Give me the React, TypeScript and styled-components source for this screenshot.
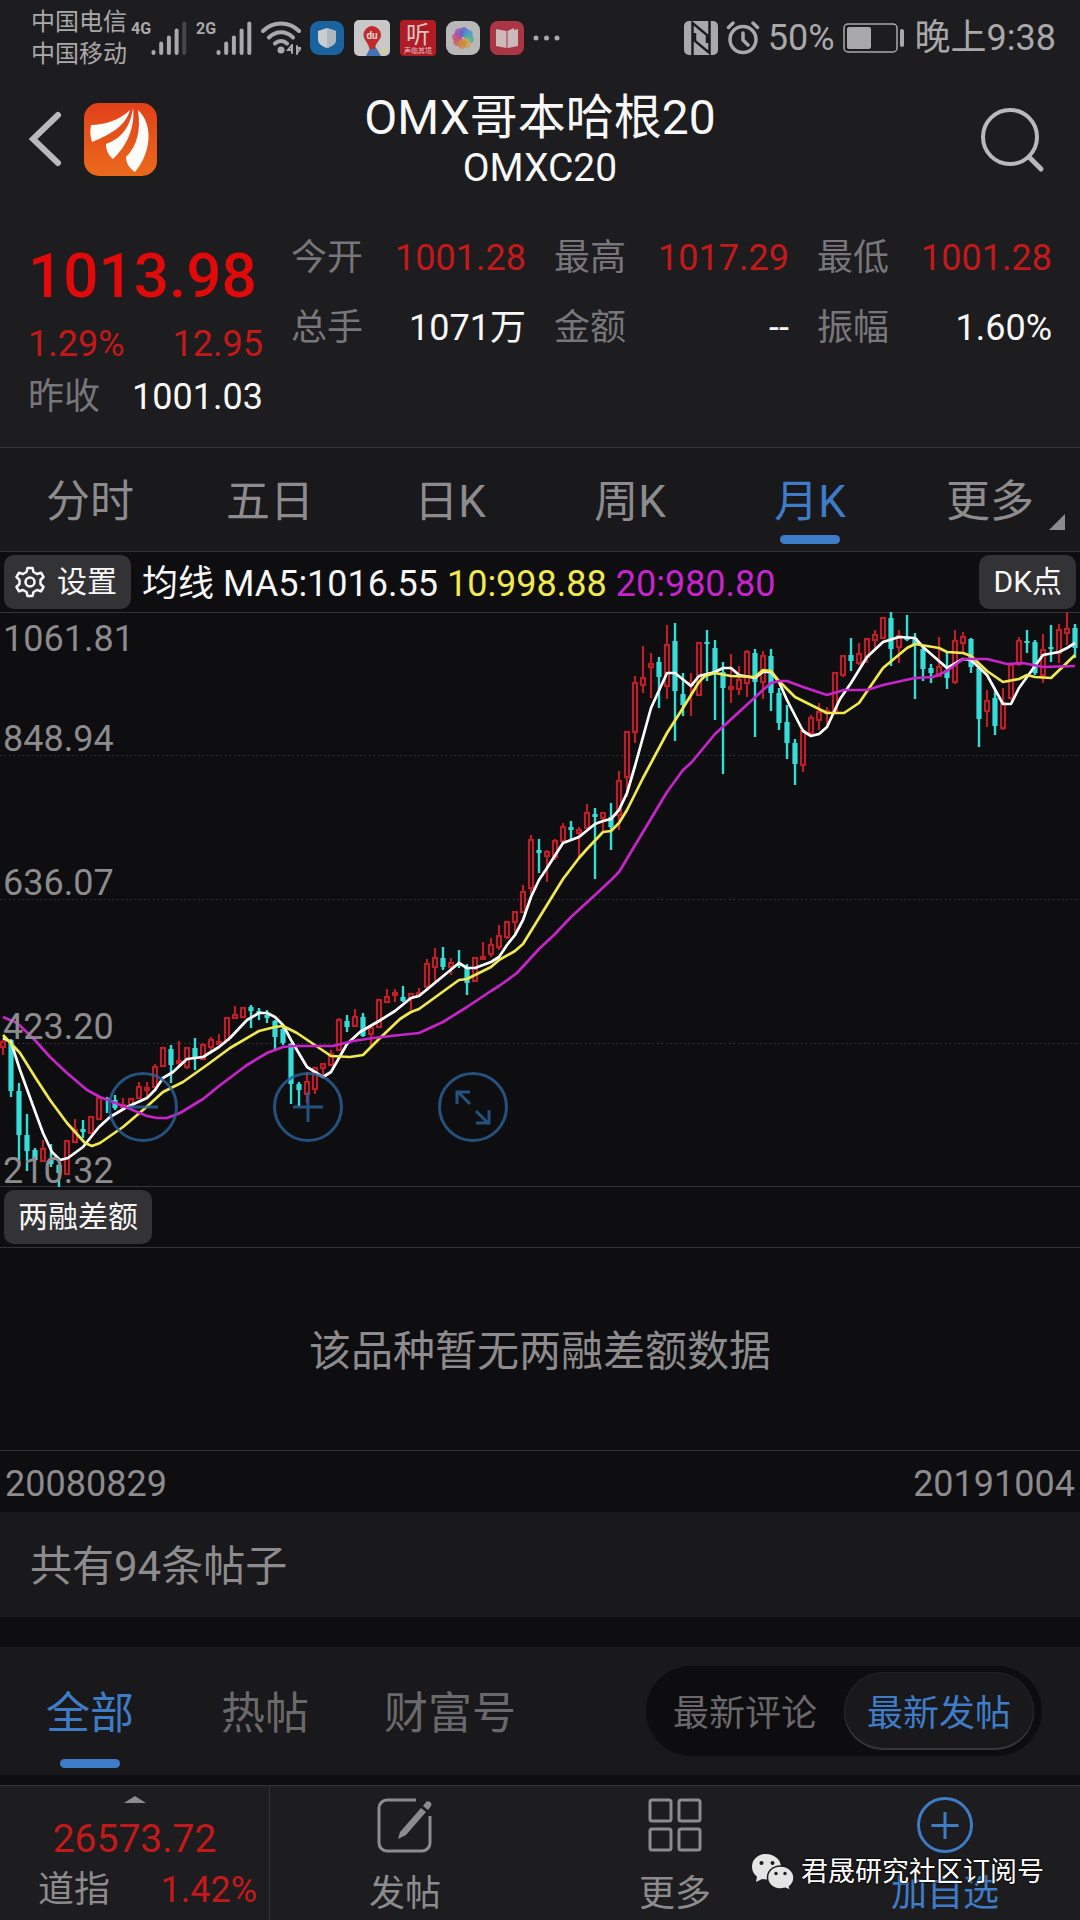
import React, { useState } from "react";
import styled, { createGlobalStyle, css } from "styled-components";

/* ---------- theme values ---------- */

const color = {
  panel: "#1d1c1e",
  bar: "#19181a",
  deep: "#0e0d0f",
  line: "#343436",
  white: "#f8f8f8",
  grey: "#8c8b8d",
  dim: "#69686b",
  label: "#77767b",
  status: "#a9a8aa",
  red: "#c4191b",
  brightRed: "#e00a0a",
  blue: "#3f7cc8",
  up: "#bb1f28",
  down: "#35dcd8",
  yellow: "#f0ea50",
  magenta: "#c824cc",
};

const GlobalStyle = createGlobalStyle`
  *, *::before, *::after { box-sizing: border-box; }
  body {
    margin: 0;
    background: ${color.deep};
    font-family: Roboto, "Noto Sans CJK SC", sans-serif;
  }
  button {
    border: 0;
    padding: 0;
    background: none;
    color: inherit;
    font: inherit;
    cursor: pointer;
  }
  svg { display: block; }
  dl, dd, h1, p { margin: 0; font-weight: 400; }
`;

const Page = styled.div`
  display: flex;
  flex-direction: column;
  min-height: 100vh;
  color: ${color.white};
  font-size: 36px;
  line-height: 52px;
  white-space: nowrap;
`;

/* ---------- status bar ---------- */

const StatusBar = styled.div`
  display: flex;
  align-items: center;
  justify-content: space-between;
  height: 75px;
  padding: 0 24px 0 31px;
  background: ${color.panel};
  color: ${color.status};
`;

const StatusGroup = styled.div<{ $gap: number }>`
  display: flex;
  align-items: center;
  gap: ${(p) => p.$gap}px;
`;

const Carriers = styled.div`
  font-size: 24px;
  line-height: 32px;
`;

const Signal = styled.div`
  display: flex;
  align-items: flex-start;
  font-size: 16px;
  font-weight: 700;
  line-height: 16px;
`;

const Clock = styled.time`
  margin-left: 2px;
`;

/* ---------- header ---------- */

const Header = styled.header`
  display: grid;
  grid-template-columns: 1fr auto 1fr;
  align-items: center;
  height: 147px;
  padding: 0 28px 18px;
  background: ${color.panel};
`;

const HeaderLeft = styled.div`
  display: flex;
  align-items: center;
  gap: 20px;
`;

const TitleBlock = styled.div`
  padding-top: 4px;
  text-align: center;
`;

const Title = styled.h1`
  font-size: 48px;
  line-height: 52px;
`;

const Code = styled.p`
  font-size: 39px;
  line-height: 48px;
`;

const SearchButton = styled.button`
  justify-self: end;
  margin-right: 7px;
`;

/* ---------- quote ---------- */

const Quote = styled.section`
  display: grid;
  grid-template-columns: repeat(4, 1fr);
  column-gap: 28px;
  height: 225px;
  padding: 1px 28px 0;
  background: ${color.panel};
`;

const PriceBlock = styled.div`
  padding-top: 11px;
`;

const Price = styled.div`
  color: ${color.brightRed};
  font-size: 62px;
  font-weight: 500;
  line-height: 84px;
`;

const Stat = styled.div<{ $height?: number }>`
  display: flex;
  justify-content: space-between;
  line-height: ${(p) => p.$height ?? 53}px;
`;

const StatLabel = styled.dt`
  color: ${color.label};
`;

const StatValue = styled.dd<{ $up?: boolean }>`
  color: ${(p) => (p.$up ? color.red : color.white)};
`;

/* ---------- period tabs ---------- */

const underline = css`
  &::after {
    content: "";
    position: absolute;
    left: 50%;
    bottom: 7px;
    width: 60px;
    height: 9px;
    margin-left: -30px;
    border-radius: 5px;
    background: ${color.blue};
  }
`;

const PeriodTabs = styled.nav`
  display: grid;
  grid-template-columns: repeat(6, 1fr);
  height: 105px;
  border-top: 1px solid ${color.line};
  border-bottom: 1px solid ${color.line};
  background: ${color.bar};
`;

const Tab = styled.button<{ $active: boolean; $idle: string }>`
  position: relative;
  padding-top: 5px;
  color: ${(p) => (p.$active ? color.blue : p.$idle)};
  font-size: 44px;
  ${(p) => p.$active && underline}
`;

const Corner = styled.span`
  position: absolute;
  right: 15px;
  bottom: 21px;
  border: 8px solid ${color.grey};
  border-top-color: transparent;
  border-left-color: transparent;
`;

/* ---------- chart ---------- */

const ChartBar = styled.div`
  display: flex;
  align-items: center;
  height: 61px;
  padding: 0 4px;
  border-bottom: 1px solid ${color.line};
  background: ${color.deep};
`;

const Chip = styled.button`
  display: flex;
  align-items: center;
  gap: 12px;
  height: 54px;
  padding: 0 14px;
  border-radius: 10px;
  background: #333235;
  color: ${color.white};
  font-size: 30px;
`;

const SettingsChip = styled(Chip)`
  padding-left: 11px;
`;

const Legend = styled.p`
  flex: 1;
  padding: 4px 0 0 11px;
`;

const LegendItem = styled.span<{ $color: string }>`
  color: ${(p) => p.$color};
`;

const ChartArea = styled.div`
  position: relative;
  border-bottom: 1px solid ${color.line};
  background: ${color.deep};
`;

const ChartSvg = styled.svg`
  width: 100%;
  height: auto;
  overflow: visible;
`;

const ChartTools = styled.div`
  position: absolute;
  left: 108px;
  bottom: 44px;
  display: flex;
  gap: 95px;
  color: #2b629c;
  opacity: 0.8;
`;

const Empty = styled.div`
  display: flex;
  align-items: center;
  justify-content: center;
  height: 203px;
  padding-top: 6px;
  border-bottom: 1px solid ${color.line};
  color: ${color.grey};
  font-size: 42px;
`;

const DateAxis = styled.div`
  display: flex;
  align-items: center;
  justify-content: space-between;
  height: 61px;
  padding: 4px 5px 0;
  color: ${color.grey};
`;

/* ---------- posts ---------- */

const PostCount = styled.div`
  display: flex;
  align-items: center;
  height: 105px;
  padding: 4px 30px 0;
  background: ${color.bar};
  color: ${color.grey};
  font-size: 42px;
`;

const PostBar = styled.section`
  display: flex;
  align-items: center;
  justify-content: space-between;
  height: 128px;
  margin: 30px 0 10px;
  padding-right: 38px;
  background: ${color.bar};
`;

const PostTabs = styled.div`
  display: grid;
  grid-template-columns: 180px 170px 200px;
  align-self: stretch;
`;

const SortSwitch = styled.div`
  display: flex;
  align-items: center;
  gap: 4px;
  height: 90px;
  padding: 0 8px 0 4px;
  border-radius: 45px;
  background: #0d0c0f;
`;

const SortButton = styled.button<{ $active: boolean }>`
  height: 78px;
  padding: 6px 23px 0;
  border-radius: 39px;
  color: ${(p) => (p.$active ? color.blue : color.dim)};
  background: ${(p) => (p.$active ? color.bar : "transparent")};
  box-shadow: ${(p) => (p.$active ? "inset 0 -2px 1px #38383a, inset 0 0 2px #38383a" : "none")};
`;

/* ---------- bottom bar ---------- */

const BottomBar = styled.footer`
  position: relative;
  display: grid;
  grid-template-columns: repeat(4, 1fr);
  flex: 1;
  min-height: 135px;
  border-top: 1px solid ${color.line};
  background: ${color.panel};
`;

const IndexCell = styled.button`
  display: flex;
  flex-direction: column;
  align-items: center;
  padding: 10px 12px 0 38px;
  border-right: 1px solid ${color.line};
  color: ${color.red};
`;

const IndexValue = styled.span`
  padding-right: 26px;
  margin-top: 8px;
  font-size: 39px;
  line-height: 56px;
`;

const CaretUp = styled.span`
  margin-right: 26px;
  border: 11px solid transparent;
  border-top: 0;
  border-bottom: 7px solid ${color.grey};
`;

const IndexRow = styled.span`
  display: flex;
  justify-content: space-between;
  align-self: stretch;
  line-height: 46px;
`;

const IndexName = styled.span`
  color: ${color.grey};
`;

const Action = styled.button<{ $primary?: boolean }>`
  display: flex;
  flex-direction: column;
  align-items: center;
  gap: 15px;
  padding-top: 11px;
  color: ${(p) => (p.$primary ? color.blue : color.grey)};
`;

const Watermark = styled.div`
  position: absolute;
  right: 36px;
  bottom: 28px;
  display: flex;
  align-items: center;
  gap: 7px;
  color: #fff;
  font-size: 27px;
  line-height: 40px;
  text-shadow: 0 0 2px #000, 0 0 2px #000;
`;

/* ---------- status icons ---------- */

function Bars({ lit }: { lit: number }) {
  return (
    <svg width="36" height="34" viewBox="0 0 36 34" stroke="currentColor" strokeWidth="4" strokeLinecap="round">
      {[29, 22, 16, 9, 2].map((top, i) => (
        <path key={top} d={`M${2.5 + i * 7.7} ${top + (i === 0 ? 2 : 0.5)}V32`} opacity={i < lit ? 1 : 0.3} />
      ))}
    </svg>
  );
}

function Wifi() {
  return (
    <svg width="40" height="34" viewBox="0 0 40 34" fill="none" stroke="currentColor" strokeWidth="4" strokeLinecap="round">
      <path d="M2 10C12 0 28 0 38 10M8 16.500C15 9.500 25 9.500 32 16.500M14 22.500C17.500 19 22.500 19 26 22.500" />
      <circle cx="20" cy="29" r="3.500" fill="currentColor" stroke="none" />
      <path d="M31 24v8M31 24l-4 5h4M36 33v-8M36 32l4-5h-4" strokeWidth="2" />
    </svg>
  );
}

function ShieldIcon() {
  return (
    <svg width="34" height="34" viewBox="0 0 34 34">
      <rect width="34" height="34" rx="9" fill="#1b62a0" />
      <path d="M17 7l9 3v8.500c0 4.500-4.500 7-9 8.500-4.500-1.500-9-4-9-8.500V10z" fill="#c9cdd1" />
      <path d="M17 7l9 3v8.500c0 4.500-4.500 7-9 8.500z" fill="#aeb6be" />
    </svg>
  );
}

function MapIcon() {
  return (
    <svg width="36" height="36" viewBox="0 0 36 36">
      <rect width="36" height="36" rx="5" fill="#c9c8c8" />
      <path d="M12 36l5-10h4l6 10z" fill="#4472b4" />
      <path d="M25 33l7-6v6z" fill="#d6cf8a" />
      <path d="M18 6a9 9 0 0 1 9 9c0 5-5 7-6.500 14h-5C14 22 9.500 20 9.500 15A9 9 0 0 1 18 6z" fill="#c02b2c" />
      <text x="18" y="19" fontSize="10" fontWeight="700" fill="#e8d8d8" textAnchor="middle">du</text>
    </svg>
  );
}

function ListenIcon() {
  return (
    <svg width="36" height="36" viewBox="0 0 36 36">
      <rect width="36" height="36" rx="4" fill="#b11c24" />
      <text x="18" y="23" fontSize="24" fill="#dcc4c4" textAnchor="middle">听</text>
      <text x="18" y="33" fontSize="7" fill="#dcc4c4" textAnchor="middle">声临其境</text>
    </svg>
  );
}

const petals = ["#c9605e", "#c7527f", "#9a55b8", "#5f66c4", "#4b97c9", "#4fb09b", "#c9a94c", "#d08248"];

function PhotosIcon() {
  return (
    <svg width="34" height="34" viewBox="0 0 34 34">
      <rect width="34" height="34" rx="9" fill="#b9b8b8" />
      {petals.map((fill, i) => (
        <ellipse key={fill} cx="17" cy="11" rx="4.500" ry="5" fill={fill} opacity="0.850" transform={`rotate(${i * 45 + 235} 17 17)`} />
      ))}
    </svg>
  );
}

function BookIcon() {
  return (
    <svg width="34" height="34" viewBox="0 0 34 34">
      <rect width="34" height="34" rx="8" fill="#ab3545" />
      <path d="M6 8l10.500 2v17L6 25z" fill="#cdb9bb" />
      <path d="M28 8l-4 1v-2l-6.500 3v17L28 25z" fill="#cdb9bb" />
    </svg>
  );
}

function MoreDots() {
  return (
    <svg width="27" height="6" viewBox="0 0 27 6" fill="currentColor">
      <circle cx="3" cy="3" r="2.500" />
      <circle cx="13.500" cy="3" r="2.500" />
      <circle cx="24" cy="3" r="2.500" />
    </svg>
  );
}

function NfcIcon() {
  return (
    <svg width="34" height="34" viewBox="0 0 34 34">
      <rect width="34" height="34" rx="5" fill={color.status} />
      <path d="M8.500 34V2L23 14v8M25.500 0v32L11 20v-8" fill="none" stroke={color.panel} strokeWidth="2.500" />
    </svg>
  );
}

function AlarmIcon() {
  return (
    <svg width="34" height="34" viewBox="0 0 34 34" fill="none" stroke="currentColor" strokeWidth="3.500" strokeLinecap="round">
      <circle cx="17" cy="18.500" r="13" />
      <path d="M17 12v7l5 5M2.500 6.500l4.500-4.500M31.500 6.500L27 2" />
    </svg>
  );
}

function BatteryIcon() {
  return (
    <svg width="62" height="30" viewBox="0 0 62 30">
      <rect x="1" y="1" width="53" height="28" rx="4" fill="none" stroke="currentColor" strokeWidth="1.500" />
      <rect x="4" y="4" width="24" height="22" rx="2" fill="currentColor" />
      <rect x="57" y="6" width="4" height="18" rx="2" fill="currentColor" />
    </svg>
  );
}

/* ---------- page icons ---------- */

function BackIcon() {
  return (
    <svg width="36" height="60" viewBox="0 0 36 60" fill="none" stroke="#b9b8ba" strokeWidth="6" strokeLinecap="round">
      <path d="M30 5L5 29L30 53" />
    </svg>
  );
}

function BrandLogo() {
  return (
    <svg width="73" height="74" viewBox="0 0 73 74" role="img" aria-label="东方财富">
      <defs>
        <linearGradient id="brand" x1="0" y1="0" x2="0" y2="1">
          <stop offset="0" stopColor="#e2401a" />
          <stop offset="1" stopColor="#ea6a1c" />
        </linearGradient>
      </defs>
      <rect width="73" height="73" rx="15" fill="url(#brand)" />
      <g fill="#fffdfa">
        <path d="M7 22C20 22 36 17 46 7C42 22 28 31 8 39C6 33 6 27 7 22z" />
        <path d="M49 5C51 20 46 40 29 56C24 52 22 47 22 41C36 36 46 26 49 5z" />
        <path d="M54 7C69 21 68 48 51 69C45 65 42 60 42 54C53 43 57 28 54 7z" />
      </g>
    </svg>
  );
}

function SearchIcon() {
  return (
    <svg width="66" height="66" viewBox="0 0 66 66" fill="none" stroke="#b9b8ba" strokeWidth="4" strokeLinecap="round">
      <circle cx="31" cy="30" r="27" />
      <path d="M50 50L62 62" strokeWidth="5" />
    </svg>
  );
}

function GearIcon() {
  return (
    <svg width="30" height="32" viewBox="0 0 30 32" fill="none" stroke="currentColor" strokeWidth="2.500" strokeLinejoin="round">
      <path d="M12.500 2h5l1 4 3.500 2 4-1.300 2.500 4.300-3 3v4l3 3-2.500 4.300-4-1.300-3.500 2-1 4h-5l-1-4-3.500-2-4 1.300L1.500 21l3-3v-4l-3-3L4 6.700 8 8l3.500-2z" />
      <circle cx="15" cy="16" r="4.500" />
    </svg>
  );
}

function ToolIcon({ d }: { d: string }) {
  return (
    <svg width="70" height="70" viewBox="0 0 70 70" fill="none" stroke="currentColor" strokeWidth="3">
      <circle cx="35" cy="35" r="33.500" />
      <path d={d} />
    </svg>
  );
}

function WriteIcon() {
  return (
    <svg width="56" height="56" viewBox="0 0 56 56" fill="none" stroke="currentColor" strokeWidth="3">
      <path d="M39 3H10a8 8 0 0 0-8 8v35a8 8 0 0 0 8 8h35a8 8 0 0 0 8-8V19" />
      <path d="M23 35L44 11l5 4-20 23-8 4z" fill="currentColor" stroke="none" />
      <path d="M46 9l3-4c2-2 7 1 5 4l-3 4z" fill="currentColor" stroke="none" />
    </svg>
  );
}

function GridIcon() {
  return (
    <svg width="56" height="56" viewBox="0 0 56 56" fill="none" stroke="currentColor" strokeWidth="3">
      <rect x="3" y="3" width="21" height="21" rx="2" />
      <rect x="32" y="3" width="21" height="21" rx="2" />
      <rect x="3" y="32" width="21" height="21" rx="2" />
      <rect x="32" y="32" width="21" height="21" rx="2" />
    </svg>
  );
}

function AddIcon() {
  return (
    <svg width="56" height="56" viewBox="0 0 56 56" fill="none" stroke="currentColor" strokeWidth="3">
      <circle cx="28" cy="28" r="26.500" />
      <path d="M28 15v27M14.500 28.500h27" />
    </svg>
  );
}

function WechatIcon() {
  return (
    <svg width="43" height="38" viewBox="0 0 43 38">
      <path d="M15 1C7 1 1 6.500 1 14c0 4 2 7.500 5 9.500L5 29l6-3c10 2 19-3 19-12C30 6.500 23 1 15 1z" fill="#e6e5e6" />
      <path d="M29.500 13C22 13 16.500 18 16.500 24.500S22 36 29.500 36l5-.8 5 2.300-1-4c3-2 4.500-5 4.500-9C43 18 37 13 29.500 13z" fill="#e6e5e6" stroke={color.panel} strokeWidth="1.500" />
      <g fill={color.panel}>
        <circle cx="10.500" cy="10" r="2" />
        <circle cx="21.500" cy="10" r="2" />
        <circle cx="25" cy="20.500" r="1.700" />
        <circle cx="34" cy="20.500" r="1.700" />
      </g>
    </svg>
  );
}

/* ---------- chart data ---------- */

/* One candle each: direction, then high, body top, body bottom and low on the plot's y scale. */
const CANDLES = `
u1040,1042,1047,1055 d1039,1040,1091,1097 d1083,1091,1135,1162 d1114,1135,1151,1171 d1148,1150,1160,1162
u1140,1149,1161,1162 d1144,1159,1164,1167 d1164,1165,1173,1187 u1140,1141,1174,1174 u1119,1130,1142,1143
d1120,1129,1132,1138 u1116,1117,1133,1134 u1097,1098,1119,1119 d1097,1098,1100,1113 d1095,1100,1108,1110
u1098,1105,1106,1107 u1098,1099,1105,1106 u1082,1087,1098,1099 u1082,1088,1090,1098 u1064,1067,1087,1088
u1047,1048,1066,1067 d1045,1049,1065,1083 u1041,1061,1062,1065 u1047,1048,1067,1069 d1038,1048,1057,1070
u1043,1045,1059,1060 u1037,1040,1047,1051 u1034,1042,1043,1043 u1017,1018,1040,1041 u1006,1015,1018,1019
u1007,1008,1017,1017 d1005,1007,1011,1028 d1008,1011,1014,1020 d1010,1015,1018,1023 d1020,1021,1037,1049
d1025,1029,1043,1045 d1043,1044,1084,1104 d1082,1084,1090,1106 u1072,1082,1094,1103 u1067,1068,1089,1094
u1063,1064,1068,1077 u1050,1054,1065,1066 u1018,1020,1050,1051 d1015,1021,1027,1032 u1009,1017,1026,1027
d1013,1017,1036,1037 u1027,1028,1034,1048 u999,1000,1027,1028 u989,997,1002,1003 u989,993,995,1002
d986,997,1001,1002 u993,994,998,1010 u988,993,994,997 u959,964,987,988 u948,958,967,982
d947,958,967,970 u958,963,967,975 d950,964,965,968 d964,968,983,995 u957,958,981,982
u942,957,957,958 u938,945,954,957 u925,936,947,950 u921,922,937,939 u911,912,922,933
u885,892,912,912 u835,840,888,895 d839,850,853,873 u850,852,856,882 u839,841,857,860
u823,827,841,842 d821,827,830,839 u827,830,833,857 u804,813,828,829 d808,814,817,879
u812,813,818,833 d803,817,827,850 u771,781,815,830 u731,732,777,797 u676,683,732,743
u646,678,685,693 u653,664,667,698 d657,662,677,708 u625,645,686,699 d623,641,691,741
d673,694,705,716 u673,683,684,716 u642,643,695,696 d630,642,644,681 d640,648,672,720
d662,672,688,774 u654,687,689,703 u666,680,689,695 u650,652,683,697 d649,653,682,737
u651,656,682,699 d649,656,693,711 d688,693,723,730 d705,722,743,759 d739,743,764,785
u728,731,765,772 u715,718,733,735 u703,712,720,730 u707,711,712,725 u673,673,712,713
u655,656,675,677 d638,655,661,671 u643,654,663,665 u638,639,657,663 u630,635,640,649
u617,618,638,638 d612,618,649,666 u630,636,647,663 d615,637,640,641 d633,638,644,699
d647,649,669,681 d664,668,673,683 u637,667,676,677 d653,670,678,689 u630,641,682,684
u632,637,643,653 d638,639,667,673 d666,668,719,747 u690,701,711,727 d690,698,726,735
u688,703,728,730 u664,665,698,700 u637,641,664,666 d630,641,643,653 d640,642,673,675
u634,650,675,683 d625,647,648,662 u624,630,653,663 u612,629,633,645 d624,628,648,658`
  .trim()
  .split(/\s+/)
  .map((item) => ({ up: item[0] === "u", y: item.slice(1).split(",").map(Number) }));

const MA5 =
  "3,1038 11,1042 20,1070 32,1103 43,1133 52,1152 60,1160 68,1158 83,1147 99,1127 110,1117 127,1107 147,1098 155,1090 163,1078 173,1072 187,1059 203,1057 219,1047 230,1038 247,1020 259,1013 267,1013 275,1017 283,1025 291,1040 307,1067 323,1077 331,1072 347,1044 360,1032 379,1021 395,1011 411,998 419,996 459,963 467,968 475,968 491,962 499,957 507,945 515,935 523,920 531,897 539,880 547,868 563,843 579,837 595,824 603,821 611,819 619,810 627,793 635,766 651,708 667,673 675,673 691,686 699,676 715,672 723,668 731,668 739,675 755,678 763,672 771,672 779,682 787,700 803,731 811,736 819,734 827,727 840,699 851,683 867,657 883,642 899,637 915,638 923,647 947,668 963,659 971,660 987,675 1003,704 1011,704 1019,688 1043,655 1059,652 1067,648 1075,643";
const MA10 =
  "3,1035 20,1053 35,1077 50,1100 67,1123 85,1143 92,1146 100,1143 123,1127 143,1110 163,1092 183,1082 207,1065 230,1048 259,1031 275,1027 283,1026 297,1033 331,1056 350,1057 363,1055 379,1039 400,1019 411,1012 419,1009 459,980 467,979 491,967 499,960 515,951 523,944 547,905 563,879 579,858 587,849 603,832 611,831 619,823 627,810 643,778 667,733 683,708 699,682 705,676 715,673 731,676 755,677 763,670 771,671 779,681 795,697 827,713 844,713 859,703 883,668 907,648 915,644 939,648 947,652 963,653 971,656 987,671 1003,682 1019,679 1027,675 1035,677 1051,678 1075,655";
const MA20 =
  "3,1017 17,1023 33,1038 50,1057 67,1073 87,1090 100,1097 123,1106 147,1116 157,1118 167,1118 180,1113 203,1099 219,1086 247,1065 267,1053 283,1047 293,1046 333,1046 353,1041 373,1038 400,1035 419,1033 443,1022 467,1007 491,991 499,986 517,973 539,949 555,934 571,917 595,895 611,880 619,872 643,832 667,792 683,770 691,763 715,734 739,712 763,690 771,683 779,681 787,681 803,687 827,695 844,690 867,690 883,685 915,678 933,677 947,671 963,659 987,659 1007,664 1023,663 1043,667 1075,666";

const SCALE = [
  { value: "1061.81", y: 651 },
  { value: "848.94", y: 751 },
  { value: "636.07", y: 895 },
  { value: "423.20", y: 1039 },
  { value: "210.32", y: 1183 },
];

function KLineChart() {
  return (
    <ChartSvg viewBox="0 613 1080 573" role="img" aria-label="月K线图">
      <g stroke="#3c3c3f" strokeDasharray="1.500 3">
        <path d="M0 755.500H1080M0 899.500H1080M0 1043.500H1080" />
      </g>
      {CANDLES.map(({ up, y: [high, top, bottom, low] }, i) => {
        const x = 3 + i * 8;
        const height = Math.max(bottom - top, 2);
        return up ? (
          <g key={i} stroke={color.up} strokeWidth="2.200" fill={color.deep}>
            <path d={`M${x} ${high}V${top}M${x} ${bottom}V${low}`} />
            <rect x={x - 2} y={top} width="4" height={height} />
          </g>
        ) : (
          <g key={i} fill={color.down}>
            <rect x={x - 1.2} y={high} width="2.400" height={low - high} />
            <rect x={x - 2.6} y={top} width="5.200" height={height} />
          </g>
        );
      })}
      <g fill="none" strokeWidth="2.700" strokeLinejoin="round">
        <polyline points={MA5} stroke="#fff" />
        <polyline points={MA10} stroke={color.yellow} />
        <polyline points={MA20} stroke={color.magenta} />
      </g>
      <g fill={color.grey} fontSize="36">
        {SCALE.map((s) => (
          <text key={s.value} x="3" y={s.y}>
            {s.value}
          </text>
        ))}
      </g>
    </ChartSvg>
  );
}

/* ---------- page ---------- */

const PERIODS = ["分时", "五日", "日K", "周K", "月K", "更多"];
const POST_TABS = ["全部", "热帖", "财富号"];
const SORTS = ["最新评论", "最新发帖"];

const STATS = [
  [
    { label: "今开", value: "1001.28", up: true },
    { label: "总手", value: "1071万" },
  ],
  [
    { label: "最高", value: "1017.29", up: true },
    { label: "金额", value: "--" },
  ],
  [
    { label: "最低", value: "1001.28", up: true },
    { label: "振幅", value: "1.60%" },
  ],
];

export default function App() {
  const [period, setPeriod] = useState("月K");
  const [postTab, setPostTab] = useState("全部");
  const [sort, setSort] = useState("最新发帖");

  return (
    <Page>
      <GlobalStyle />
      <StatusBar>
        <StatusGroup $gap={9}>
          <StatusGroup $gap={4}>
            <Carriers>
              <div>中国电信</div>
              <div>中国移动</div>
            </Carriers>
            <Signal>4G<Bars lit={4} /></Signal>
          </StatusGroup>
          <Signal>2G<Bars lit={5} /></Signal>
          <Wifi />
          <StatusGroup $gap={10}>
            <ShieldIcon />
            <MapIcon />
            <ListenIcon />
            <PhotosIcon />
            <BookIcon />
          </StatusGroup>
          <StatusGroup $gap={0}>
            <MoreDots />
          </StatusGroup>
        </StatusGroup>
        <StatusGroup $gap={8}>
          <NfcIcon />
          <AlarmIcon />
          <span>50%</span>
          <BatteryIcon />
          <Clock>晚上9:38</Clock>
        </StatusGroup>
      </StatusBar>

      <Header>
        <HeaderLeft>
          <button type="button" aria-label="返回"><BackIcon /></button>
          <BrandLogo />
        </HeaderLeft>
        <TitleBlock>
          <Title>OMX哥本哈根20</Title>
          <Code>OMXC20</Code>
        </TitleBlock>
        <SearchButton type="button" aria-label="搜索"><SearchIcon /></SearchButton>
      </Header>

      <Quote>
        <PriceBlock>
          <Price>1013.98</Price>
          <dl>
            <Stat>
              <StatValue as="dt" $up>1.29%</StatValue>
              <StatValue $up>12.95</StatValue>
            </Stat>
            <Stat>
              <StatLabel>昨收</StatLabel>
              <StatValue>1001.03</StatValue>
            </Stat>
          </dl>
        </PriceBlock>
        {STATS.map((column) => (
          <dl key={column[0].label}>
            {column.map((s) => (
              <Stat key={s.label} $height={70}>
                <StatLabel>{s.label}</StatLabel>
                <StatValue $up={s.up}>{s.value}</StatValue>
              </Stat>
            ))}
          </dl>
        ))}
      </Quote>

      <PeriodTabs>
        {PERIODS.map((name) => (
          <Tab key={name} type="button" $active={name === period} $idle={color.grey} onClick={() => setPeriod(name)}>
            {name}
            {name === "更多" && <Corner />}
          </Tab>
        ))}
      </PeriodTabs>

      <ChartBar>
        <SettingsChip type="button"><GearIcon />设置</SettingsChip>
        <Legend>
          均线 MA5:1016.55 <LegendItem $color={color.yellow}>10:998.88</LegendItem>{" "}
          <LegendItem $color={color.magenta}>20:980.80</LegendItem>
        </Legend>
        <Chip type="button">DK点</Chip>
      </ChartBar>
      <ChartArea>
        <KLineChart />
        <ChartTools>
          <button type="button" aria-label="缩小"><ToolIcon d="M20 35H50" /></button>
          <button type="button" aria-label="放大"><ToolIcon d="M20 35H50M35 20V50" /></button>
          <button type="button" aria-label="全屏">
            <ToolIcon d="M32 32L19 19M19 32V20H32M38 39L51 52M51 38V51H38" />
          </button>
        </ChartTools>
      </ChartArea>
      <ChartBar>
        <Chip type="button">两融差额</Chip>
      </ChartBar>
      <Empty>该品种暂无两融差额数据</Empty>
      <DateAxis>
        <span>20080829</span>
        <span>20191004</span>
      </DateAxis>

      <PostCount>共有94条帖子</PostCount>
      <PostBar>
        <PostTabs>
          {POST_TABS.map((name) => (
            <Tab key={name} type="button" $active={name === postTab} $idle={color.dim} onClick={() => setPostTab(name)}>
              {name}
            </Tab>
          ))}
        </PostTabs>
        <SortSwitch>
          {SORTS.map((name) => (
            <SortButton key={name} type="button" $active={name === sort} onClick={() => setSort(name)}>
              {name}
            </SortButton>
          ))}
        </SortSwitch>
      </PostBar>

      <BottomBar>
        <IndexCell type="button">
          <CaretUp />
          <IndexValue>26573.72</IndexValue>
          <IndexRow>
            <IndexName>道指</IndexName>
            <span>1.42%</span>
          </IndexRow>
        </IndexCell>
        <Action type="button"><WriteIcon />发帖</Action>
        <Action type="button"><GridIcon />更多</Action>
        <Action type="button" $primary><AddIcon />加自选</Action>
        <Watermark><WechatIcon />君晟研究社区订阅号</Watermark>
      </BottomBar>
    </Page>
  );
}
